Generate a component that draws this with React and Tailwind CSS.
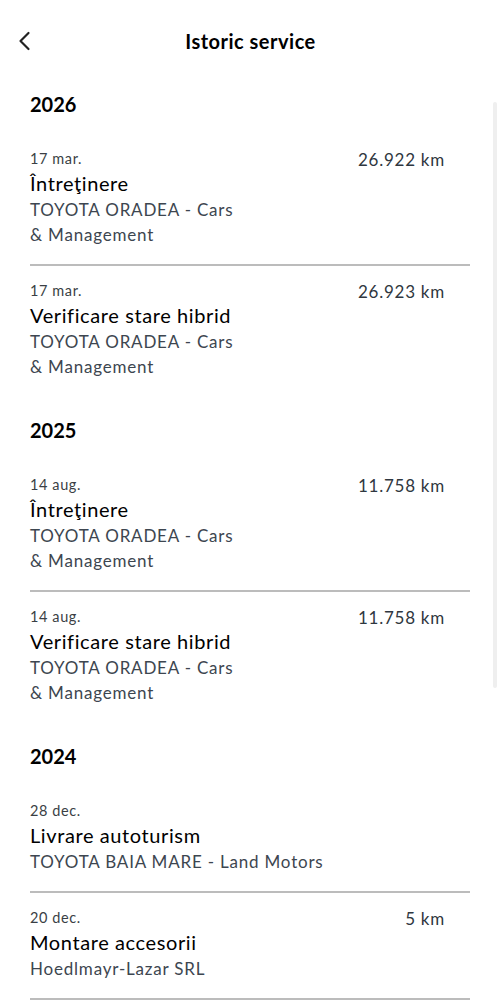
const sections = [
  {
    year: "2026",
    items: [
      { date: "17 mar.", title: "Întreţinere", place: ["TOYOTA ORADEA - Cars", "& Management"], km: "26.922 km" },
      { date: "17 mar.", title: "Verificare stare hibrid", place: ["TOYOTA ORADEA - Cars", "& Management"], km: "26.923 km" },
    ],
  },
  {
    year: "2025",
    items: [
      { date: "14 aug.", title: "Întreţinere", place: ["TOYOTA ORADEA - Cars", "& Management"], km: "11.758 km" },
      { date: "14 aug.", title: "Verificare stare hibrid", place: ["TOYOTA ORADEA - Cars", "& Management"], km: "11.758 km" },
    ],
  },
  {
    year: "2024",
    items: [
      { date: "28 dec.", title: "Livrare autoturism", place: ["TOYOTA BAIA MARE - Land Motors"], km: "" },
      { date: "20 dec.", title: "Montare accesorii", place: ["Hoedlmayr-Lazar SRL"], km: "5 km", last: true },
    ],
  },
];

const ServiceItem = ({ item, divider }) => (
  <div className={divider ? "border-b-2 border-[#bcbcbc]" : ""}>
    <div className="flex justify-between pt-[15px] pb-[17px] pr-[25px]">
      <div>
        <p className="text-[14.5px] leading-[20px] tracking-[0.6px] text-[#3a3f45]">{item.date}</p>
        <p className="text-[20px] leading-[28px] tracking-[0.6px] text-black">{item.title}</p>
        {item.place.map((line) => (
          <p key={line} className="text-[17px] leading-[25px] tracking-[0.8px] text-[#3d4650]">
            {line}
          </p>
        ))}
      </div>
      {item.km && (
        <p className="text-[17px] leading-[24px] tracking-[0.75px] text-[#2f3740] -mt-[1px]">{item.km}</p>
      )}
    </div>
  </div>
);

export default function App() {
  return (
    <div className="relative w-[501px] h-[1000px] overflow-hidden bg-white font-['Lato',sans-serif]">
      <div className="h-[82px] flex items-center justify-center relative">
        <svg className="absolute left-[17px] top-[31px]" width="14" height="20" viewBox="0 0 14 20" fill="none">
          <path d="M11.5 2 L3.5 10 L11.5 18" stroke="#222" strokeWidth="2.2" strokeLinecap="round" strokeLinejoin="round" />
        </svg>
        <h1 className="text-[20px] font-bold tracking-[0.5px] text-black">Istoric service</h1>
      </div>

      <div className="pl-[30px] pr-[31px]">
        {sections.map((section, si) => (
          <div key={section.year} className={si === 0 ? "pt-[8px]" : "pt-[20px]"}>
            <h2 className="text-[20px] leading-[28px] font-bold text-black mb-[16px]">{section.year}</h2>
            {section.items.map((item, i) => (
              <ServiceItem
                key={i}
                item={item}
                divider={i < section.items.length - 1 || item.last}
              />
            ))}
          </div>
        ))}
      </div>

      <div className="absolute right-[4px] top-[102px] w-[4px] h-[586px] rounded-full bg-[#efefef]" />
    </div>
  );
}
